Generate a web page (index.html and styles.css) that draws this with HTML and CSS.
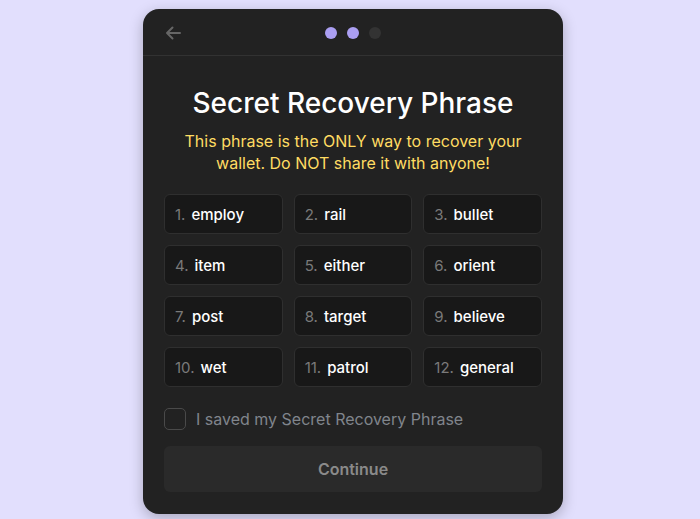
FILE: index.html
```html
<!DOCTYPE html>
<html>
<head>
<meta charset="utf-8">
<link rel="stylesheet" href="styles.css">
</head>
<body>
<div class="card">
  <div class="header">
    <svg class="back" width="16" height="14" viewBox="0 0 16 14"><path d="M15 7H2M7.5 1.5L2 7l5.5 5.5" fill="none" stroke="#666" stroke-width="2" stroke-linecap="round" stroke-linejoin="round"/></svg>
    <div class="dots"><span class="dot on"></span><span class="dot on"></span><span class="dot"></span></div>
  </div>
  <div class="body">
    <h1 class="title">Secret Recovery Phrase</h1>
    <p class="warn">This phrase is the ONLY way to recover your wallet. Do NOT share it with anyone!</p>
    <div class="grid">
      <div class="cell"><span class="n">1.</span><span class="w">employ</span></div>
      <div class="cell"><span class="n">2.</span><span class="w">rail</span></div>
      <div class="cell"><span class="n">3.</span><span class="w">bullet</span></div>
      <div class="cell"><span class="n">4.</span><span class="w">item</span></div>
      <div class="cell"><span class="n">5.</span><span class="w">either</span></div>
      <div class="cell"><span class="n">6.</span><span class="w">orient</span></div>
      <div class="cell"><span class="n">7.</span><span class="w">post</span></div>
      <div class="cell"><span class="n">8.</span><span class="w">target</span></div>
      <div class="cell"><span class="n">9.</span><span class="w">believe</span></div>
      <div class="cell"><span class="n">10.</span><span class="w">wet</span></div>
      <div class="cell"><span class="n">11.</span><span class="w">patrol</span></div>
      <div class="cell"><span class="n">12.</span><span class="w">general</span></div>
    </div>
    <label class="check"><span class="box"></span><span class="label">I saved my Secret Recovery Phrase</span></label>
    <button class="btn">Continue</button>
  </div>
</div>
</body>
</html>
```
FILE: styles.css
```css
html, body { margin: 0; padding: 0; }
body {
  background: #e2dffd;
  font-family: Inter, "Noto Sans", sans-serif;
  height: 519px;
  overflow: hidden;
}
.card {
  width: 420px;
  height: 505px;
  margin: 9px 0 0 143px;
  background: #222222;
  border-radius: 16px;
  box-shadow: 0 4px 14px rgba(0,0,0,0.25);
  box-sizing: border-box;
  overflow: hidden;
}
.header {
  height: 46px;
  border-bottom: 1px solid #323232;
  display: flex;
  align-items: center;
  position: relative;
  padding-left: 22px;
}
.back { margin-top: 1px; }
.dots {
  position: absolute;
  left: 0; right: 0; top: 18px;
  display: flex;
  justify-content: center;
  gap: 10px;
}
.dot { width: 12px; height: 12px; border-radius: 50%; background: #333333; }
.dot.on { background: #ab9ff2; }
.body {
  padding: 0 21px;
  display: flex;
  flex-direction: column;
}
.title {
  margin: 30px 0 0;
  font-size: 28px;
  font-weight: 500;
  color: #ffffff;
  text-align: center;
  line-height: 34px;
}
.warn {
  margin: 10px 12px 0;
  font-size: 16px;
  line-height: 22px;
  color: #ffdc62;
  text-align: center;
}
.grid {
  margin-top: 20px;
  display: grid;
  grid-template-columns: repeat(3, 1fr);
  gap: 11px 11px;
}
.cell {
  height: 40px;
  box-sizing: border-box;
  background: #181818;
  border: 1px solid #2f2f2f;
  border-radius: 6px;
  display: flex;
  align-items: center;
  padding-left: 10px;
  font-size: 15px;
}
.n { color: #7a7a7a; margin-right: 6px; }
.w { color: #ffffff; font-weight: 500; }
.check {
  margin-top: 21px;
  display: flex;
  align-items: center;
  gap: 10px;
}
.box {
  width: 22px; height: 22px;
  box-sizing: border-box;
  border: 1px solid #4a4a4a;
  border-radius: 5px;
}
.label { color: #80858c; font-size: 16px; }
.btn {
  margin-top: 16px;
  height: 46px;
  border: none;
  border-radius: 6px;
  background: #2a2a2a;
  color: #8a8a8a;
  font-family: inherit;
  font-weight: 600;
  font-size: 16px;
}
```
